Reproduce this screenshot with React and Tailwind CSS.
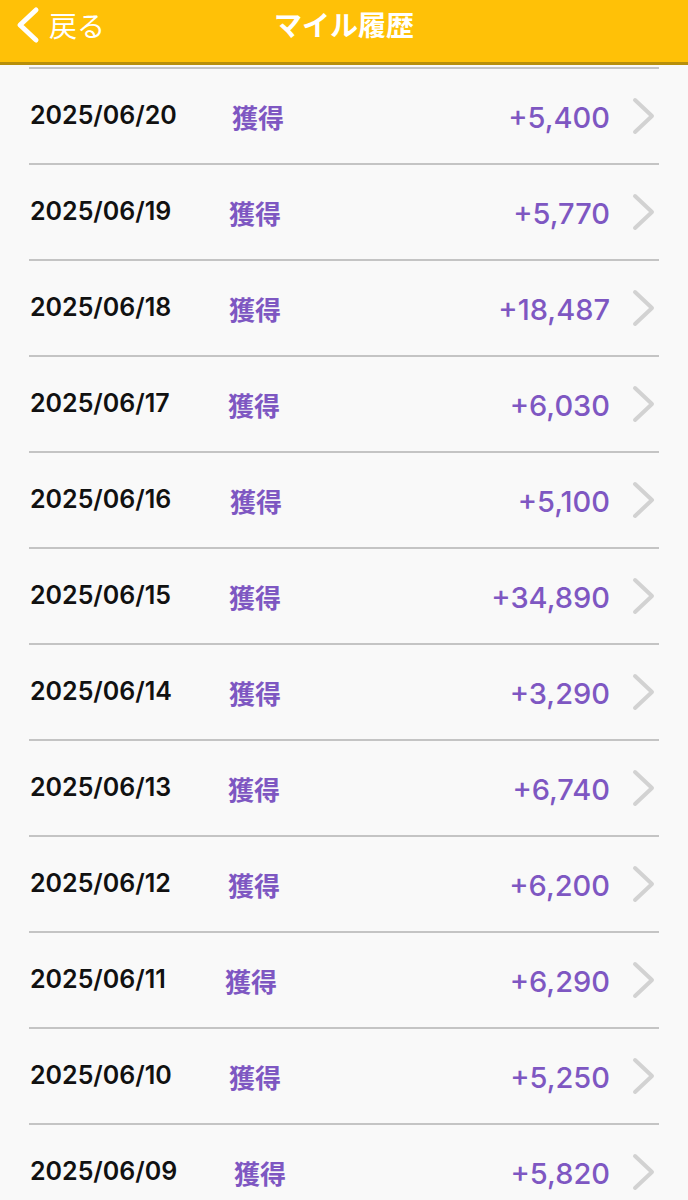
import React from "react";

const rows = [
  ["2025/06/20", "+5,400", "ml-[3px]"],
  ["2025/06/19", "+5,770", "ml-[0px]"],
  ["2025/06/18", "+18,487", "ml-[0px]"],
  ["2025/06/17", "+6,030", "ml-[-1px]"],
  ["2025/06/16", "+5,100", "ml-[1px]"],
  ["2025/06/15", "+34,890", "ml-[0px]"],
  ["2025/06/14", "+3,290", "ml-[0px]"],
  ["2025/06/13", "+6,740", "ml-[-1px]"],
  ["2025/06/12", "+6,200", "ml-[-1px]"],
  ["2025/06/11", "+6,290", "ml-[-4px]"],
  ["2025/06/10", "+5,250", "ml-[0px]"],
  ["2025/06/09", "+5,820", "ml-[5px]"],
];

function Chevron() {
  return (
    <svg width="26" height="38" viewBox="0 0 26 38" className="shrink-0">
      <polyline
        points="4,3 21,19 4,35"
        fill="none"
        stroke="#d2d2d2"
        strokeWidth="4"
        strokeLinecap="round"
        strokeLinejoin="round"
      />
    </svg>
  );
}

export default function App() {
  return (
    <div className="w-[688px] h-[1200px] overflow-hidden bg-[#f9f9f9]">
      <div className="h-[65px] bg-[#FFC107] border-b-[3px] border-[#b88f0a] relative">
        <div className="absolute left-[14px] top-[6px] flex items-center">
          <svg width="28" height="38" viewBox="0 0 28 38">
            <polyline
              points="22,4 6,19 22,34"
              fill="none"
              stroke="#ffffff"
              strokeWidth="5"
              strokeLinecap="round"
              strokeLinejoin="round"
            />
          </svg>
          <span
            className="ml-[7px] text-[28px] leading-none text-white"
            style={{ fontFamily: '"Noto Sans CJK JP", sans-serif' }}
          >
            戻る
          </span>
        </div>
        <div
          className="pt-[6px] text-center text-[28px] leading-[36px] font-bold text-white"
          style={{ fontFamily: '"Noto Sans CJK JP", sans-serif' }}
        >
          マイル履歴
        </div>
      </div>
      <div className="ml-[29px] w-[630px] mt-[2px] border-t-2 border-[#c4c4c4]">
        {rows.map(([date, amt, ml]) => (
          <div
            key={date}
            className="h-[96px] border-b-2 border-[#c4c4c4] flex items-center"
          >
            <div
              className="w-[200px] shrink-0 pl-[1px] text-[25px] font-semibold text-[#111]"
              style={{ fontFamily: 'Inter, "Liberation Sans", sans-serif' }}
            >
              {date}
            </div>
            <div
              className={`${ml} text-[26px] font-bold text-[#7E57C2]`}
              style={{ fontFamily: '"Noto Sans CJK JP", sans-serif' }}
            >
              獲得
            </div>
            <div
              className="flex-1 text-right text-[29px] font-medium text-[#7E57C2] pr-[21px] pt-[3px]"
              style={{ fontFamily: 'Inter, "Liberation Sans", sans-serif' }}
            >
              {amt}
            </div>
            <div className="mr-[2px]">
              <Chevron />
            </div>
          </div>
        ))}
      </div>
    </div>
  );
}
